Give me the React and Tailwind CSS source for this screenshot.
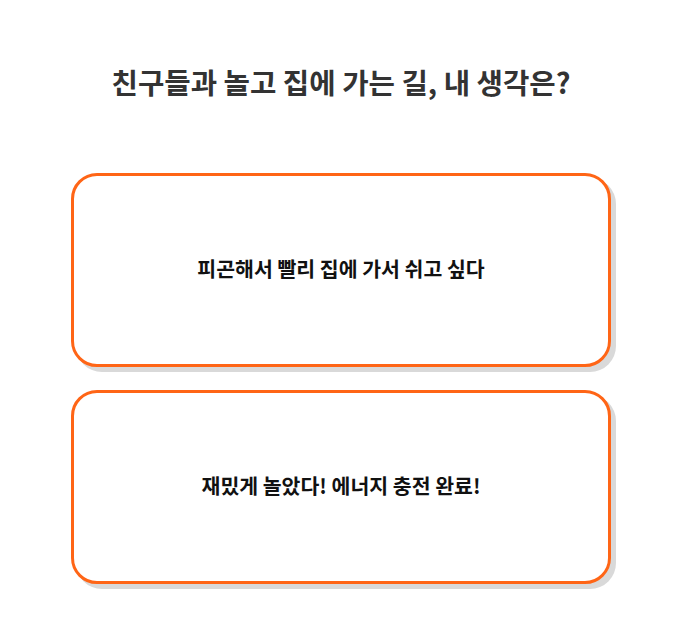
import React from 'react';

const options = [
  '피곤해서 빨리 집에 가서 쉬고 싶다',
  '재밌게 놀았다! 에너지 충전 완료!',
];

const OptionCard = ({ label }) => (
  <button className="w-full h-[194px] flex items-center justify-center pb-[3px] bg-white border-[3px] border-[#ff6516] rounded-[26px] shadow-[5px_5px_0_#d9d9d9] text-[20.5px] font-bold text-[#111]">
    {label}
  </button>
);

export default function App() {
  return (
    <div className="min-h-screen bg-white" style={{ fontFamily: '"Noto Sans CJK KR", "Noto Sans", sans-serif' }}>
      <div className="w-[680px] pl-[71px] pr-[69px] pt-[62px]">
        <h1 className="text-center text-[28.7px] font-bold text-[#333] leading-[40px]">
          친구들과 놀고 집에 가는 길, 내 생각은?
        </h1>
        <div className="mt-[71px] flex flex-col gap-[23px]">
          {options.map(o => <OptionCard key={o} label={o} />)}
        </div>
      </div>
    </div>
  );
}
